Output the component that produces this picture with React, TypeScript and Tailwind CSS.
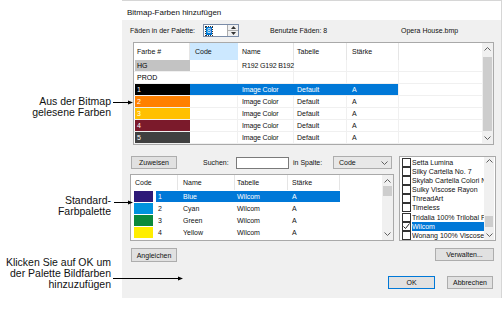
import React from "react";

function Arrow({ w }: { w: number }) {
  return (
    <svg className="block" width={w} height={5} viewBox={`0 0 ${w} 5`}>
      <line x1="0" y1="2.5" x2={w - 3} y2="2.5" stroke="#000" strokeWidth="1" />
      <polygon points={`${w - 5},0.5 ${w},2.5 ${w - 5},4.5`} fill="#000" />
    </svg>
  );
}

function Chev({ up }: { up?: boolean }) {
  return (
    <svg className="block" width="7" height="4" viewBox="0 0 7 4">
      <polyline
        points={up ? "0.5,3.5 3.5,0.5 6.5,3.5" : "0.5,0.5 3.5,3.5 6.5,0.5"}
        fill="none"
        stroke="#606060"
        strokeWidth="1"
      />
    </svg>
  );
}

function Tri({ up }: { up?: boolean }) {
  return (
    <svg className="block" width="5" height="3" viewBox="0 0 5 3">
      <polygon points={up ? "0,3 2.5,0 5,3" : "0,0 2.5,3 5,0"} fill="#333" />
    </svg>
  );
}

function Btn({ label, cls }: { label: string; cls: string }) {
  return (
    <div className={`flex items-center justify-center bg-[#e1e1e1] border ${cls}`}>{label}</div>
  );
}

const topRows = [
  { c: "#c3c3c3", t: "HG", tc: "text-black", name: "R192 G192 B192", tab: "", st: "" },
  { c: "#ffffff", t: "PROD", tc: "text-black", name: "", tab: "", st: "" },
  { c: "#000000", t: "1", tc: "text-white", name: "Image Color", tab: "Default", st: "A", sel: true },
  { c: "#ff8000", t: "2", tc: "text-white", name: "Image Color", tab: "Default", st: "A" },
  { c: "#ffc000", t: "3", tc: "text-white", name: "Image Color", tab: "Default", st: "A" },
  { c: "#7b1a2b", t: "4", tc: "text-white", name: "Image Color", tab: "Default", st: "A" },
  { c: "#404040", t: "5", tc: "text-white", name: "Image Color", tab: "Default", st: "A" },
];

const lowRows = [
  { c: "#2e1a78", n: "1", name: "Blue", sel: true },
  { c: "#0093dd", n: "2", name: "Cyan" },
  { c: "#0c8a3a", n: "3", name: "Green" },
  { c: "#ffee00", n: "4", name: "Yellow" },
];

const brands = [
  "Setta Lumina",
  "Silky Cartella No. 7",
  "Skylab Cartella Colori Nuovi",
  "Sulky Viscose Rayon",
  "ThreadArt",
  "Timeless",
  "Tridalia 100% Trilobal Poly",
  "Wilcom",
  "Wonang 100% Viscose Rayon",
];

function TopTable() {
  return (
    <div className="mt-[5px] ml-[11px] w-[361px] h-[103px] border border-[#a9a9a9] bg-white flex">
      <div className="flex-1 flex flex-col">
        <div className="h-[17px] flex">
          <div className="w-[56px] pl-[3px] flex items-center border-r border-[#e5e5e5]">Farbe #</div>
          <div className="w-[48px] pl-[5px] flex items-center bg-[#cce8ff]">Code</div>
          <div className="w-[56px] pl-[4px] flex items-center border-r border-[#e5e5e5]">Name</div>
          <div className="w-[53px] pl-[3px] flex items-center border-r border-[#e5e5e5]">Tabelle</div>
          <div className="w-[52px] pl-[5px] flex items-center border-r border-[#e5e5e5]">Stärke</div>
          <div className="flex-1" />
        </div>
        {topRows.map((r, i) => (
          <div key={i} className="h-[12px] flex border-b border-[#f0f0f0]">
            <div className="w-[56px] pl-[1px] flex">
              <div className={`flex-1 pl-[2px] flex items-center ${r.tc}`} style={{ backgroundColor: r.c }}>
                {r.t}
              </div>
            </div>
            <div className={`w-[48px] border-r ${r.sel ? "bg-[#0078d7] border-[#0078d7]" : "border-[#f0f0f0]"}`} />
            <div className={`w-[56px] pl-[4px] flex items-center border-r whitespace-nowrap tracking-[-0.15px] ${r.sel ? "bg-[#0078d7] border-[#0078d7] text-white" : "border-[#f0f0f0]"}`}>
              {r.name}
            </div>
            <div className={`w-[53px] pl-[3px] flex items-center border-r ${r.sel ? "bg-[#0078d7] border-[#0078d7] text-white" : "border-[#f0f0f0]"}`}>
              {r.tab}
            </div>
            <div className={`w-[52px] pl-[5px] flex items-center border-r ${r.sel ? "bg-[#0078d7] border-[#f0f0f0] text-white" : "border-[#f0f0f0]"}`}>
              {r.st}
            </div>
            <div className="flex-1" />
          </div>
        ))}
      </div>
      <div className="w-[11px] flex flex-col bg-[#f0f0f0]">
        <div className="h-[12px] flex items-center justify-center">
          <Chev up />
        </div>
        <div className="flex-1 px-[1px] pt-[2px]">
          <div className="h-[74px] bg-[#cdcdcd]" />
        </div>
        <div className="h-[12px] flex items-center justify-center">
          <Chev />
        </div>
      </div>
    </div>
  );
}

function LowTable() {
  return (
    <div className="mt-[5px] w-[264px] h-[67px] border border-[#a9a9a9] bg-white flex">
      <div className="flex-1 flex flex-col">
        <div className="h-[15px] flex">
          <div className="w-[47px] pl-[4px] flex items-center border-r border-[#e5e5e5]">Code</div>
          <div className="w-[57px] pl-[5px] flex items-center border-r border-[#e5e5e5]">Name</div>
          <div className="w-[53px] pl-[2px] flex items-center border-r border-[#e5e5e5]">Tabelle</div>
          <div className="w-[52px] pl-[4px] flex items-center border-r border-[#e5e5e5]">Stärke</div>
          <div className="flex-1" />
        </div>
        {lowRows.map((r, i) => {
          const s = r.sel ? "bg-[#0078d7] text-white" : "";
          return (
            <div key={i} className="h-[12px] flex pt-[1px]">
              <div className="w-[25px] pl-[3px]">
                <div className="w-[19px] h-[11px]" style={{ backgroundColor: r.c }} />
              </div>
              <div className={`w-[22px] pl-[2px] flex items-center ${s}`}>{r.n}</div>
              <div className={`w-[57px] pl-[5px] flex items-center ${s}`}>{r.name}</div>
              <div className={`w-[53px] pl-[2px] flex items-center ${s}`}>Wilcom</div>
              <div className={`w-[52px] pl-[4px] flex items-center ${s}`}>A</div>
              <div className="flex-1" />
            </div>
          );
        })}
      </div>
      <div className="w-[11px] flex flex-col bg-[#f0f0f0]">
        <div className="h-[11px] flex items-center justify-center">
          <Chev up />
        </div>
        <div className="flex-1 px-[1px]">
          <div className="h-[10px] bg-[#cdcdcd]" />
        </div>
        <div className="h-[12px] flex items-center justify-center">
          <Chev />
        </div>
      </div>
    </div>
  );
}

function BrandList() {
  return (
    <div className="ml-[5px] w-[97px] h-[85px] border border-[#a9a9a9] bg-white flex">
      <div className="flex-1 flex flex-col pt-[0.5px] overflow-hidden">
        {brands.map((b) => {
          const sel = b === "Wilcom";
          return (
            <div key={b} className="h-[9.2px] flex items-center pl-[2px]">
              <div className="w-[9px] h-[9px] border border-[#333] bg-white shrink-0 flex items-center justify-center">
                {sel && (
                  <svg className="block" width="7" height="7" viewBox="0 0 7 7">
                    <polyline points="0.5,3.5 2.5,5.5 6.5,0.5" fill="none" stroke="#222" strokeWidth="1" />
                  </svg>
                )}
              </div>
              <div
                className={`ml-[1px] flex-1 h-full flex items-center whitespace-nowrap overflow-hidden ${
                  sel ? "bg-[#0078d7] text-white" : ""
                }`}
              >
                {b}
              </div>
            </div>
          );
        })}
      </div>
      <div className="w-[10px] mr-[1px] flex flex-col bg-[#f0f0f0]">
        <div className="h-[8px] flex items-center justify-center">
          <Chev up />
        </div>
        <div className="flex-1 px-[1px] pt-[51px]">
          <div className="h-[11px] bg-[#cdcdcd]" />
        </div>
        <div className="h-[11px] flex items-center justify-center">
          <Chev />
        </div>
      </div>
    </div>
  );
}

function Dialog() {
  return (
    <div className="w-[380px] h-[298px] shrink-0 flex flex-col border-t border-r border-[#d6d6d6] bg-[#f0f0f0] text-[7px] leading-[9px] text-[#111]">
      <div className="h-[19px] bg-white flex items-center pl-[5px] pt-[3px] text-[8px]">Bitmap-Farben hinzufügen</div>
      <div className="mt-[4px] h-[13px] flex items-center pl-[8px] whitespace-nowrap">
        <div className="w-[73px]">Fäden in der Palette:</div>
        <div className="w-[36px] h-[13px] flex border border-[#7a8ca8] bg-white">
          <div className="flex-1 flex items-center pl-[2px]">
            <span className="bg-[#0078d7] text-white px-[1px] leading-[8px] outline outline-1 outline-dotted outline-[#333]">8</span>
          </div>
          <div className="w-[11px] flex flex-col border-l border-[#adadad]">
            <div className="flex-1 flex items-center justify-center bg-[#f0f0f0] border-b border-[#adadad]">
              <Tri up />
            </div>
            <div className="flex-1 flex items-center justify-center bg-[#f0f0f0]">
              <Tri />
            </div>
          </div>
        </div>
        <div className="ml-[31px] w-[131px]">Benutzte Fäden: 8</div>
        <div>Opera House.bmp</div>
      </div>
      <TopTable />
      <div className="mt-[11px] flex pl-[8px]">
        <div className="w-[264px] flex flex-col">
          <div className="h-[13px] flex items-center whitespace-nowrap">
            <Btn label="Zuweisen" cls="ml-[1px] w-[46px] h-[13px] border-[#adadad]" />
            <div className="ml-[26px] w-[33px]">Suchen:</div>
            <div className="w-[53px] h-[12px] border border-[#7a7a7a] bg-white" />
            <div className="ml-[4px] w-[40px]">in Spalte:</div>
            <div className="w-[59px] h-[13px] border border-[#adadad] bg-[#e8e8e8] flex items-center justify-between pl-[5px] pr-[3px]">
              <span>Code</span>
              <Chev />
            </div>
          </div>
          <LowTable />
        </div>
        <BrandList />
      </div>
      <div className="mt-[7px] flex justify-between items-start pl-[9px] pr-[7px]">
        <Btn label="Angleichen" cls="w-[46px] h-[14px] border-[#adadad]" />
        <Btn label="Verwalten..." cls="w-[59px] h-[13px] border-[#adadad]" />
      </div>
      <div className="mt-[14px] flex justify-end gap-[12px] pr-[8px]">
        <Btn label="OK" cls="w-[47px] h-[13px] border-[#0078d7]" />
        <Btn label="Abbrechen" cls="w-[46px] h-[13px] border-[#adadad]" />
      </div>
    </div>
  );
}

function Annotations() {
  return (
    <div className="w-[122px] shrink-0 flex flex-col text-right text-[10.5px] leading-[10.7px] text-[#111] pr-[11px] whitespace-nowrap">
      <div className="relative mt-[96px]">
        <div>Aus der Bitmap</div>
        <div>gelesene Farben</div>
        <div className="absolute left-[113px] top-[4px]">
          <Arrow w={20} />
        </div>
      </div>
      <div className="relative mt-[78px]">
        <div>Standard-</div>
        <div>Farbpalette</div>
        <div className="absolute left-[114px] top-[5px]">
          <Arrow w={19} />
        </div>
      </div>
      <div className="relative mt-[40.6px]">
        <div>Klicken Sie auf OK um</div>
        <div>der Palette Bildfarben</div>
        <div>hinzuzufügen</div>
        <div className="absolute left-[113px] top-[19px]">
          <Arrow w={70} />
        </div>
      </div>
    </div>
  );
}

export default function App() {
  return (
    <div className="w-[503px] h-[312px] bg-white flex font-['Liberation_Sans',Arial,sans-serif] overflow-hidden">
      <Annotations />
      <Dialog />
    </div>
  );
}
